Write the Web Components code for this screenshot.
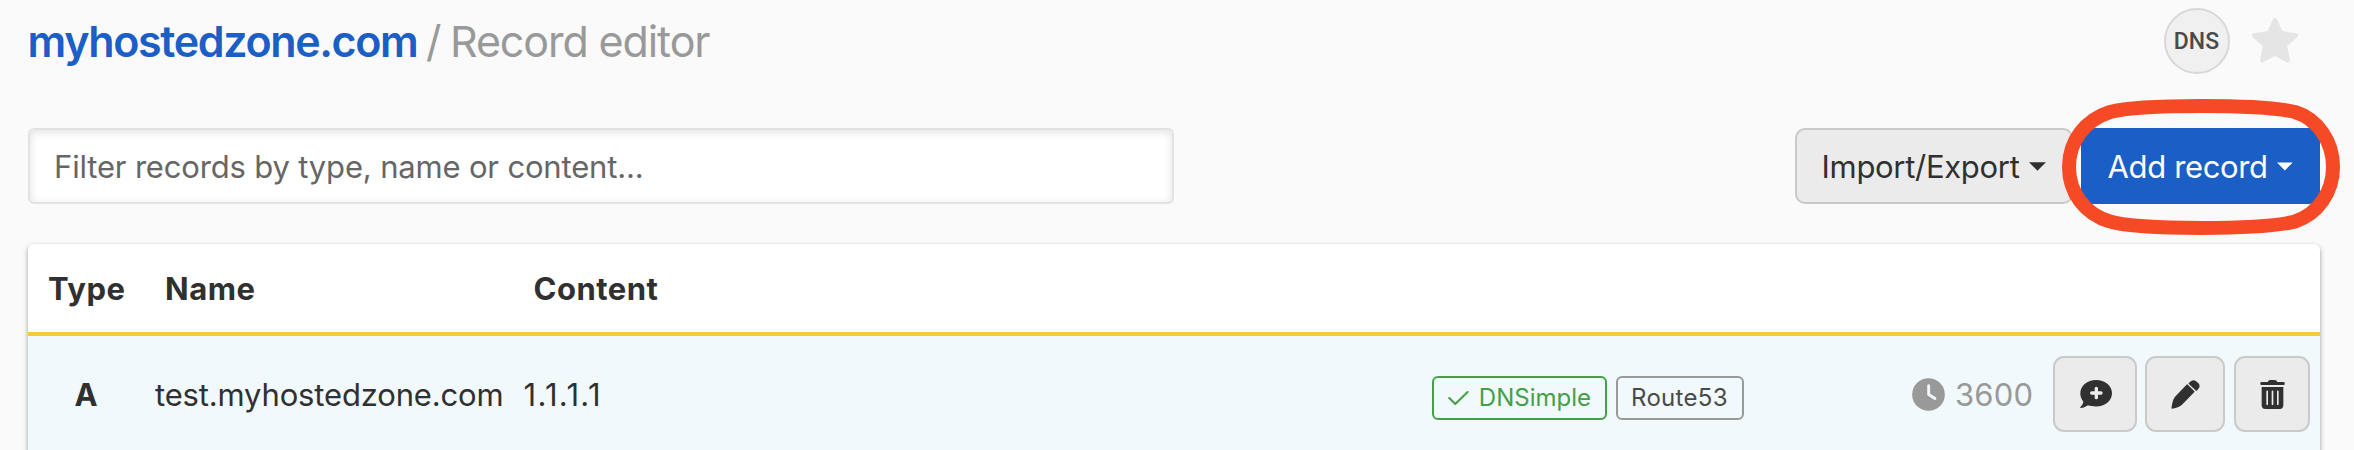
<!DOCTYPE html>
<html lang="en">
<head>
<meta charset="utf-8">
<title>Record editor</title>
<style>
html,body{margin:0;height:450px;overflow:hidden;background:#fafafa}
body{font-family:Inter,"Liberation Sans",sans-serif;font-size:31px;color:#303030}
</style>
</head>
<body>
<record-page></record-page>
<script>
function define(name, html) {
  const t = document.createElement('template');
  t.innerHTML = html;
  customElements.define(name, class extends HTMLElement {
    constructor() {
      super();
      this.attachShadow({mode: 'open'}).appendChild(t.content.cloneNode(true));
    }
  });
}

define('page-header', `
<style>
:host{display:flex;height:66px;align-items:center}
h1{margin:0 0 0 -.5px;display:flex;font-size:43px;line-height:66px;font-weight:400;color:#999;white-space:nowrap}
a{color:#1b5ec6;font-weight:600;letter-spacing:-1.36px}
i{font-style:normal;margin:0 8.5px}
span{letter-spacing:-1.1px}
.dns{margin-left:auto;box-sizing:border-box;width:66px;height:66px;border:2px solid #d8d8d8;border-radius:50%;background:#f0f0f0;color:#4a4a4a;font:500 23px/64px Roboto,sans-serif;text-align:center}
svg{width:46px;height:45px;margin:0 22px 0 22.5px;position:relative;top:-1px}
</style>
<h1><a>myhostedzone.com</a><i>/</i><span>Record editor</span></h1>
<div class="dns">DNS</div>
<svg viewBox="413 54 138 134"><path d="M482 61L499 99L544 106L511 135L520 180L482 159L444 180L453 135L420 106L465 99Z" fill="#e5e5e5" stroke="#e5e5e5" stroke-width="14" stroke-linejoin="round"/></svg>`);

define('filter-box', `
<style>
:host{display:block;box-sizing:border-box;width:1146px;height:76px;border:2px solid #e2e2e2;border-radius:6px;background:#fff;box-shadow:inset 0 2px 8px rgba(0,0,0,.12);padding-left:24px;line-height:73px;color:#666;letter-spacing:-.17px;white-space:nowrap}
</style><slot></slot>`);

define('menu-button', `
<style>
:host{display:flex;box-sizing:border-box;height:76px;align-items:center;padding:0 25px 0 24.5px;border:2px solid #c9c9c9;border-radius:10px;background:#ebebeb;letter-spacing:-.3px;white-space:nowrap}
:host([primary]){background:#1b5ec6;border-color:#1b5ec6;color:#fff;letter-spacing:-.35px}
svg{width:18px;height:9px;margin-left:9.5px}
</style><slot></slot><svg viewBox="0 0 18 9"><path d="M0 0H18L9 9Z" fill="currentColor"/></svg>`);

define('focus-ring', `
<style>
:host{position:absolute;left:-21px;top:-31px;width:284px;height:140px;pointer-events:none}
svg{display:block}
</style>
<svg width="284" height="140" viewBox="2060 97 284 140"><path d="M2069 167C2069 141 2085 120 2110 112C2140 104 2262 104 2295 112C2318 119 2333 142 2333 167C2333 192 2318 214 2295 221.5C2262 230 2140 230 2110 221.5C2085 214 2069 193 2069 167Z" fill="none" stroke="#f54a25" stroke-width="14"/></svg>`);

define('tool-bar', `
<style>
:host{display:flex;height:76px;margin-top:54px}
.acts{margin-left:auto;display:flex;gap:8px}
.acts>*{width:278px}
.acts>.wrap{position:relative;width:239px}
</style>
<filter-box>Filter records by type, name or content...</filter-box>
<div class="acts"><menu-button>Import/Export</menu-button><div class="wrap"><menu-button primary>Add record</menu-button><focus-ring></focus-ring></div></div>`);

define('zone-badge', `
<style>
:host{display:flex;box-sizing:border-box;height:44px;align-items:center;padding:0 14px 0 13px;border:2px solid #999;border-radius:6px;color:#4a4a4a;font-size:24px;line-height:40px;letter-spacing:.3px;white-space:nowrap}
:host([ok]){border-color:#43a047;color:#43a047;letter-spacing:0}
svg{display:none;width:22px;height:16px;margin:0 10px 0 1px}
:host([ok]) svg{display:block}
</style>
<svg viewBox="143 147 66 48"><path d="M147 171L166 190L205 152" fill="none" stroke="currentColor" stroke-width="6.5" stroke-linecap="round" stroke-linejoin="round"/></svg><slot></slot>`);

define('icon-button', `
<style>
:host{display:flex;box-sizing:border-box;height:76px;align-items:center;justify-content:center;border:2px solid #cacaca;border-radius:11px;background:#ebebeb;color:#303030}
</style><slot></slot>`);

define('record-row', `
<style>
:host{display:flex;height:116px;align-items:center;background:#f1f9fd;line-height:76px;white-space:nowrap}
b{width:116px;text-align:center}
b,.n,.c{padding-top:2px}
.n{margin-left:11px;width:368.5px;letter-spacing:-.16px}
.c{letter-spacing:1.3px}
.badges{margin-left:auto;display:flex;gap:9px;padding-top:8px}
.ttl{display:flex;align-items:center;width:141px;margin-left:168px;color:#999;letter-spacing:.2px}
.ttl svg{width:33px;height:33px;margin-right:10px}
.ttl span{padding-top:2px}
.btns{display:flex;gap:8px 8px;padding-right:10px}
.btns :last-child{margin-left:1px}
</style>
<b>A</b><span class="n">test.myhostedzone.com</span><span class="c">1.1.1.1</span>
<div class="badges"><zone-badge ok style="width:175px">DNSimple</zone-badge><zone-badge style="width:128px">Route53</zone-badge></div>
<div class="ttl"><svg viewBox="96.500 143.500 97 97"><circle cx="145" cy="192" r="48" fill="#999"/><path d="M145.500 166V192L164 204" fill="none" stroke="#f1f9fe" stroke-width="8.500" stroke-linecap="round" stroke-linejoin="round"/></svg><span>3600</span></div>
<div class="btns">
<icon-button style="width:84px"><svg width="32" height="28" viewBox="596 150 96 84"><path fill="currentColor" d="M644.500 150C671 150 692 167.500 692 190S671 229.500 644.500 229.500C634 229.500 626 228 620 226C613 231 605 234 598 234C596 234 596 232 597.500 230.500C602 226 605 221 606 215C600 208 597 200 597 190C597 167.500 618 150 644.500 150Z"/><path d="M645 175V203M631 189H659" stroke="#ebebeb" stroke-width="10" stroke-linecap="round" fill="none"/></svg></icon-button>
<icon-button style="width:80px"><svg width="29" height="29" viewBox="872.500 153 87 87"><path fill="currentColor" d="M919 167Q921 165 923 167L942 186Q944 188 942 190L907 226Q898 236 876 239Q873 239 874 236C876 226 877 214 884 204ZM926 162L933 156Q940 151 947 156L955 163Q960 169 957 176L951 184Q949 187 946 184L926 165Q925 163 926 162Z"/></svg></icon-button>
<icon-button style="width:76px"><svg width="25" height="29" viewBox="1138 153 75 87"><path fill="currentColor" d="M1161 159Q1163 153 1169 153H1182Q1188 153 1190 159H1209Q1212 159 1212 162V165Q1212 168 1209 168H1142Q1139 168 1139 165V162Q1139 159 1142 159ZM1143 174H1208V229Q1208 240 1197 240H1154Q1143 240 1143 229Z"/><path d="M1159.500 187V226M1175.500 187V226M1191.500 187V226" stroke="#ebebeb" stroke-width="5" stroke-linecap="round"/></svg></icon-button>
</div>`);

define('record-table', `
<style>
:host{display:block;margin-top:40px;height:260px;border-radius:6px 6px 0 0;background:#fff;box-shadow:0 2px 5px rgba(0,0,0,.38)}
.head{display:grid;grid-template-columns:117px 368.5px 1fr;height:88px;line-height:89px;padding-left:20px;font-weight:700;border-bottom:4px solid #fbca38;letter-spacing:.5px}
</style>
<div class="head"><span>Type</span><span>Name</span><span>Content</span></div>
<record-row></record-row>`);

define('record-page', `
<style>:host{display:block;box-sizing:border-box;height:450px;overflow:hidden;padding:8px 34px 0 28px}</style>
<page-header></page-header><tool-bar></tool-bar><record-table></record-table>`);
</script>
</body>
</html>
